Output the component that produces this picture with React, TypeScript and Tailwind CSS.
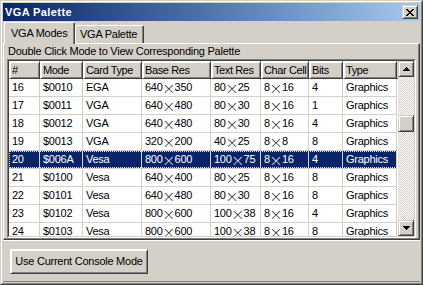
import React from "react";

const cols = [
  { h: "#", w: "w-[31px]" },
  { h: "Mode", w: "w-[43px]" },
  { h: "Card Type", w: "w-[59px]" },
  { h: "Base Res", w: "w-[69px]" },
  { h: "Text Res", w: "w-[50px]" },
  { h: "Char Cell", w: "w-[48px]" },
  { h: "Bits", w: "w-[34px]" },
  { h: "Type", w: "w-[54px]" },
];

const rows: string[][] = [
  ["16", "$0010", "EGA", "640×350", "80×25", "8×16", "4", "Graphics"],
  ["17", "$0011", "VGA", "640×480", "80×30", "8×16", "1", "Graphics"],
  ["18", "$0012", "VGA", "640×480", "80×30", "8×16", "4", "Graphics"],
  ["19", "$0013", "VGA", "320×200", "40×25", "8×8", "8", "Graphics"],
  ["20", "$006A", "Vesa", "800×600", "100×75", "8×16", "4", "Graphics"],
  ["21", "$0100", "Vesa", "640×400", "80×25", "8×16", "8", "Graphics"],
  ["22", "$0101", "Vesa", "640×480", "80×30", "8×16", "8", "Graphics"],
  ["23", "$0102", "Vesa", "800×600", "100×38", "8×16", "4", "Graphics"],
  ["24", "$0103", "Vesa", "800×600", "100×38", "8×16", "8", "Graphics"],
];

function CellText({ t }: { t: string }) {
  if (!t.includes("×")) return <span className="leading-none">{t}</span>;
  const [a, b] = t.split("×");
  return (
    <span className="flex items-center leading-none">
      <span>{a}</span>
      <span className="w-[12px] h-[11px] flex items-center justify-center font-['Noto_Sans_CJK_SC',sans-serif] text-[13px] leading-none font-light">
        ×
      </span>
      <span>{b}</span>
    </span>
  );
}

function CloseX() {
  const px: [number, number][] = [
    [0, 0], [1, 0], [6, 0], [7, 0],
    [1, 1], [2, 1], [5, 1], [6, 1],
    [2, 2], [3, 2], [4, 2], [5, 2],
    [3, 3], [4, 3],
    [2, 4], [3, 4], [4, 4], [5, 4],
    [1, 5], [2, 5], [5, 5], [6, 5],
    [0, 6], [1, 6], [6, 6], [7, 6],
  ];
  return (
    <svg width="8" height="7" viewBox="0 0 8 7" shapeRendering="crispEdges">
      {px.map(([x, y], i) => (
        <rect key={i} x={x} y={y} width="1" height="1" fill="#000" />
      ))}
    </svg>
  );
}

function Arrow({ up }: { up: boolean }) {
  return (
    <svg width="7" height="4" viewBox="0 0 7 4" shapeRendering="crispEdges">
      {up ? (
        <>
          <rect x="3" y="0" width="1" height="1" fill="#000" />
          <rect x="2" y="1" width="3" height="1" fill="#000" />
          <rect x="1" y="2" width="5" height="1" fill="#000" />
          <rect x="0" y="3" width="7" height="1" fill="#000" />
        </>
      ) : (
        <>
          <rect x="0" y="0" width="7" height="1" fill="#000" />
          <rect x="1" y="1" width="5" height="1" fill="#000" />
          <rect x="2" y="2" width="3" height="1" fill="#000" />
          <rect x="3" y="3" width="1" height="1" fill="#000" />
        </>
      )}
    </svg>
  );
}

const raised =
  "bg-[#d4d0c8] border border-t-[#d4d0c8] border-l-[#d4d0c8] border-r-[#404040] border-b-[#404040] shadow-[inset_1px_1px_#ffffff,inset_-1px_-1px_#808080]";

export default function App() {
  return (
    <div className="w-[423px] h-[285px] overflow-hidden bg-[#d4d0c8] text-black text-[11px] tracking-[-0.25px] font-['Liberation_Sans',Arial,sans-serif]">
      <div className="h-full border border-t-[#d4d0c8] border-l-[#d4d0c8] border-r-[#404040] border-b-[#404040]">
        <div className="h-full border border-t-white border-l-white border-r-[#808080] border-b-[#808080]">
          <div className="h-full p-[1px] flex flex-col">
            {/* Title bar */}
            <div className="h-[18px] shrink-0 flex items-center justify-between pl-[2px] pr-[2px] bg-linear-to-r from-[#0a246a] to-[#a6caf0]">
              <span className="text-white font-bold text-[11px] tracking-[0.4px] leading-none">VGA Palette</span>
              <div className={`w-[16px] h-[14px] flex items-center justify-center ${raised}`}>
                <CloseX />
              </div>
            </div>

            {/* Tab strip */}
            <div className="h-[22px] shrink-0 flex items-end pl-[1px] relative z-10">
              <div className="h-[22px] w-[71px] -mb-[1px] bg-[#d4d0c8] border-l border-t border-r border-l-white border-t-white border-r-[#404040] shadow-[inset_-1px_0_#808080] rounded-t-[2px] pl-[6px] flex items-center leading-none">
                VGA Modes
              </div>
              <div className="h-[18px] w-[69px] bg-[#d4d0c8] border-l border-t border-r border-l-white border-t-white border-r-[#404040] shadow-[inset_-1px_0_#808080] rounded-t-[2px] pl-[4px] flex items-center leading-none">
                VGA Palette
              </div>
            </div>

            {/* Tab page */}
            <div className="h-[197px] shrink-0 border-t border-l border-r border-b border-t-white border-l-white border-r-[#404040] border-b-[#404040] shadow-[inset_-1px_-1px_#808080] flex flex-col">
              <div className="h-[15px] shrink-0 flex items-center pl-[4px] leading-none">
                Double Click Mode to View Corresponding Palette
              </div>
              <div className="ml-[3px] w-[409px] h-[179px] shrink-0 border border-t-[#808080] border-l-[#808080] border-r-white border-b-white">
                <div className="h-full border border-t-[#404040] border-l-[#404040] border-r-[#d4d0c8] border-b-[#d4d0c8] flex bg-white overflow-hidden">
                  {/* table */}
                  <div className="w-[389px] shrink-0 flex flex-col overflow-hidden">
                    <div className="h-[18px] shrink-0 flex">
                      {cols.map((c) => (
                        <div
                          key={c.h}
                          className={`${c.w} h-full shrink-0 flex items-center pl-[2px] leading-none whitespace-nowrap tracking-[-0.4px] ${raised} border-t-white border-l-white`}
                        >
                          {c.h}
                        </div>
                      ))}
                      <div className="flex-1 h-full bg-[#d4d0c8] border-t border-t-white border-b border-b-[#404040]" />
                    </div>
                    {rows.map((r) => {
                      const sel = r[0] === "20";
                      return (
                        <div key={r[0]} className="h-[18px] shrink-0 flex">
                          <div className={`relative flex ${sel ? "bg-[#0a246a] text-white" : ""}`}>
                            {r.map((t, i) => (
                              <div
                                key={i}
                                className={`${cols[i].w} h-[18px] shrink-0 flex items-center pl-[3px] whitespace-nowrap leading-none border-r border-b border-[#d4d0c8]`}
                              >
                                <CellText t={t} />
                              </div>
                            ))}
                            {sel && (
                              <div className="absolute left-0 top-0 right-0 bottom-[1px] border border-dotted border-[#f5db95]" />
                            )}
                          </div>
                        </div>
                      );
                    })}
                  </div>
                  {/* scrollbar */}
                  <div className="w-[16px] shrink-0 flex flex-col">
                    <div className={`w-[16px] h-[16px] shrink-0 flex items-center justify-center ${raised}`}>
                      <Arrow up />
                    </div>
                    <div className="flex-1 flex flex-col bg-[repeating-conic-gradient(#d4d0c8_0_25%,#ffffff_0_50%)] bg-[length:2px_2px]">
                      <div className="h-[38px] shrink-0" />
                      <div className={`w-[16px] h-[17px] shrink-0 ${raised}`} />
                    </div>
                    <div className={`w-[16px] h-[16px] shrink-0 flex items-center justify-center ${raised}`}>
                      <Arrow up={false} />
                    </div>
                  </div>
                </div>
              </div>
            </div>

            {/* Bottom panel */}
            <div className="flex-1 border-t border-t-white border-b border-b-[#808080]">
              <div className={`ml-[7px] mt-[8px] w-[138px] h-[25px] flex items-center justify-center leading-none ${raised} border-t-white border-l-white`}>
                Use Current Console Mode
              </div>
            </div>
          </div>
        </div>
      </div>
    </div>
  );
}
